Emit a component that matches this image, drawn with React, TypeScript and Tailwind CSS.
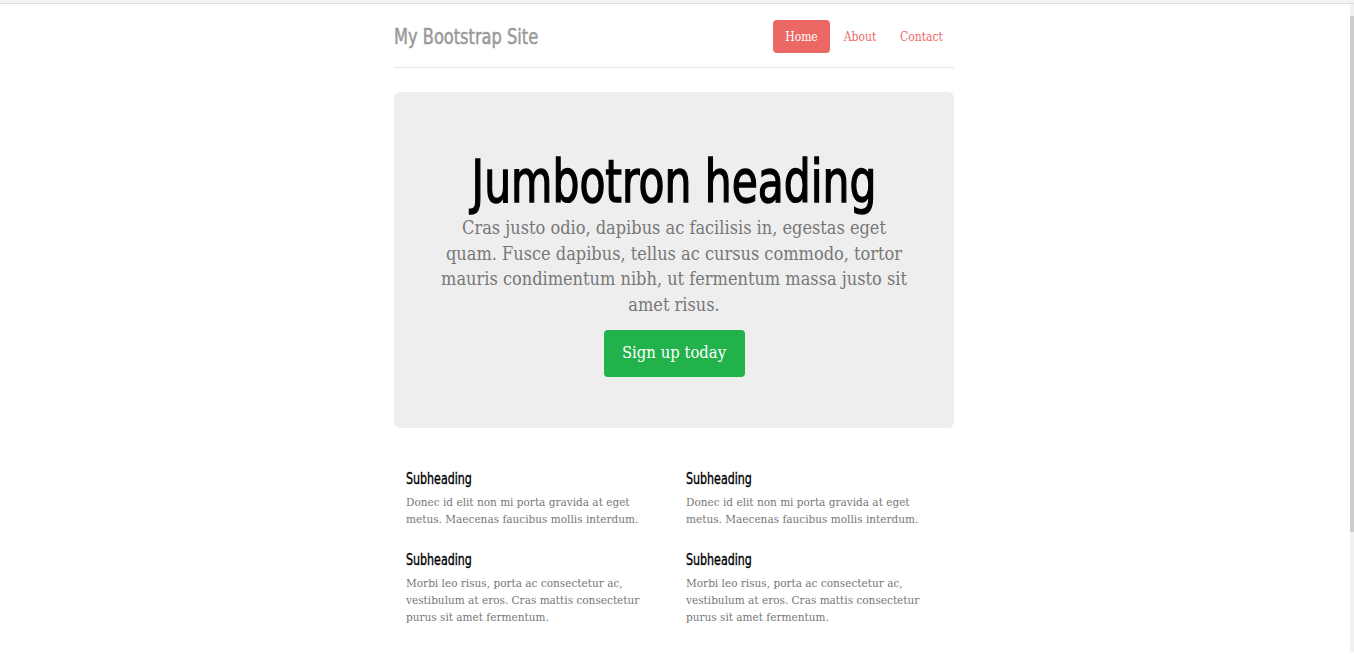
import React from "react";

const narrow = "font-['Liberation_Sans_Narrow','DejaVu_Sans_Condensed',sans-serif]";
const serif = "font-['DejaVu_Serif_Condensed','Liberation_Serif',Georgia,serif]";

function Col({ lines }: { lines: string[] }) {
  return (
    <div className="w-[280px] px-3">
      <h4 className={`${narrow} text-[15px] leading-[18px] text-black m-0 whitespace-nowrap`}>
        <span className="inline-block scale-x-[0.82] origin-left [-webkit-text-stroke:0.35px_#000]">Subheading</span>
      </h4>
      <p className={`${serif} text-[11.7px] leading-[17px] text-[#777] mt-[6px]`}>
        {lines.map((l, i) => (
          <span key={i} className="block whitespace-nowrap">{l}</span>
        ))}
      </p>
    </div>
  );
}

export default function App() {
  const a = ["Donec id elit non mi porta gravida at eget", "metus. Maecenas faucibus mollis interdum."];
  const b = [
    "Morbi leo risus, porta ac consectetur ac,",
    "vestibulum at eros. Cras mattis consectetur",
    "purus sit amet fermentum.",
  ];
  return (
    <div className="w-full h-[654px] bg-white overflow-hidden flex flex-col">
      <div className="h-[3px] bg-[#f3f3f3] border-b border-[#dcdcdc] shrink-0 box-content" />
      <div className="flex flex-1">
        <div className="flex-1 pr-[2px]">
          <div className="w-[560px] mx-auto">
            <header className="flex items-center justify-between pt-4 pb-[14px] border-b border-[#e5e5e5]">
              <h3 className={`${narrow} text-[22px] leading-[24px] text-[#999] m-0 whitespace-nowrap`}>
                <span className="inline-block scale-x-[0.82] origin-left [-webkit-text-stroke:0.5px_#999]">My Bootstrap Site</span>
              </h3>
              <nav className={`${serif} flex text-[12px]`}>
                <span className="w-[57px] h-[33px] flex items-center justify-center rounded bg-[#eb6864] text-white">Home</span>
                <span className="w-[58px] h-[33px] ml-px flex items-center justify-center text-[#eb6864]">About</span>
                <span className="w-[65px] h-[33px] flex items-center justify-center text-[#eb6864]">Contact</span>
              </nav>
            </header>
            <section className="mt-6 bg-[#eee] rounded-md pt-[56px] pb-[51px] flex flex-col items-center text-center">
              <h1 className={`${narrow} text-[59px] leading-[67px] text-black m-0 whitespace-nowrap`}>
                <span className="inline-block scale-x-[0.8] [-webkit-text-stroke:1.4px_#000]">Jumbotron heading</span>
              </h1>
              <p className={`${serif} text-[18px] leading-[25.7px] text-[#777] mt-0`}>
                <span className="block whitespace-nowrap">Cras justo odio, dapibus ac facilisis in, egestas eget</span>
                <span className="block whitespace-nowrap">quam. Fusce dapibus, tellus ac cursus commodo, tortor</span>
                <span className="block whitespace-nowrap">mauris condimentum nibh, ut fermentum massa justo sit</span>
                <span className="block whitespace-nowrap">amet risus.</span>
              </p>
              <button className={`${serif} mt-[12px] w-[141px] h-[47px] rounded bg-[#22b24c] text-white text-[16.5px]`}>
                Sign up today
              </button>
            </section>
            <div className="flex mt-[42px]">
              <Col lines={a} />
              <Col lines={a} />
            </div>
            <div className="flex mt-[23px]">
              <Col lines={b} />
              <Col lines={b} />
            </div>
          </div>
        </div>
        <div className="w-[4px] flex flex-col bg-[#f1f1f1] mb-[2px]">
          <div className="h-[12px]" />
          <div className="h-[516px] bg-[#cdcdcd]" />
        </div>
      </div>
    </div>
  );
}
